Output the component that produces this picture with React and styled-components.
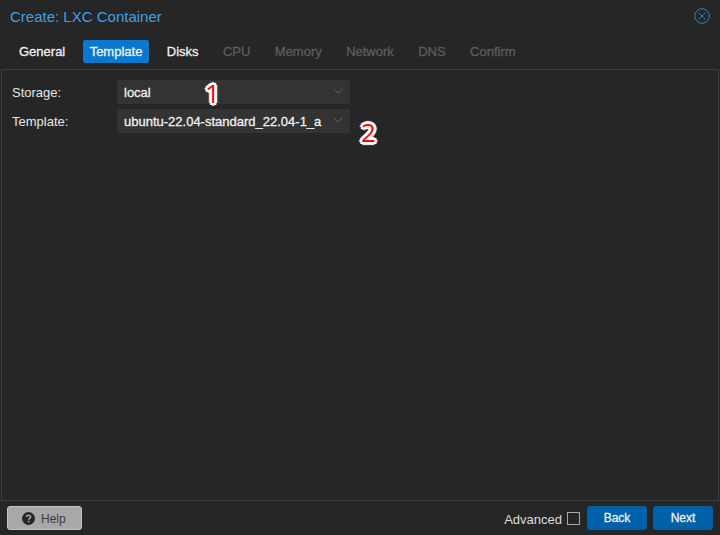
import React from "react";
import styled, { createGlobalStyle } from "styled-components";

const Global = createGlobalStyle`
  html, body { margin: 0; padding: 0; background: #262626; }
  body { font-family: "Liberation Sans", Arial, sans-serif; }
`;

const Window = styled.div`
  position: relative;
  width: 720px;
  height: 535px;
  box-sizing: border-box;
  background: #262626;
  display: flex;
  flex-direction: column;
  overflow: hidden;
`;

const Header = styled.header`
  height: 32px;
  flex: none;
  display: flex;
  align-items: center;
  justify-content: space-between;
  padding: 0 10px;
`;

const Title = styled.h1`
  margin: 0;
  font-size: 15px;
  font-weight: 400;
  color: #3fa0e6;
`;

const CloseIcon = styled.svg`
  width: 16px;
  height: 16px;
  display: block;
`;

const TabBar = styled.nav`
  height: 37px;
  flex: none;
  box-sizing: border-box;
  padding: 8px 0 0 12px;
  display: flex;
  align-items: flex-start;
  gap: 10.4px;
`;

const Tab = styled.div`
  height: 23px;
  box-sizing: border-box;
  padding: 0 7px;
  display: flex;
  align-items: center;
  font-size: 13px;
  font-weight: 400;
  -webkit-text-stroke: 0.3px currentColor;
  border-radius: 2px;
  background: ${(p) => (p.$active ? "#0a78cf" : "transparent")};
  color: ${(p) => (p.$disabled ? "#5d5d5d" : "#f0f0f0")};
`;

const Body = styled.main`
  flex: 1;
  margin: 0 1px;
  border: 1px solid #3d3d3d;
  padding: 10px 10px;
  display: flex;
  flex-direction: column;
  gap: 5px;
`;

const FormRow = styled.div`
  display: flex;
  align-items: center;
  height: 24px;
`;

const Label = styled.label`
  width: 105px;
  flex: none;
  font-size: 13px;
  color: #e6e6e6;
`;

const Select = styled.div`
  width: 233px;
  height: 24px;
  box-sizing: border-box;
  background: #333333;
  padding: 1px 7px 0 7px;
  display: flex;
  align-items: center;
  justify-content: space-between;
  color: #f0f0f0;
  font-size: 13px;
  -webkit-text-stroke: 0.3px currentColor;
`;

const Chevron = styled.svg`
  width: 10px;
  height: 6px;
  display: block;
  margin-top: -4px;
`;

const Marker = styled.span`
  position: absolute;
  left: ${(p) => p.$x}px;
  top: ${(p) => p.$y}px;
  font-family: "Open Sans", sans-serif;
  font-size: 26px;
  line-height: 24px;
  font-weight: 400;
  color: #f00808;
  text-shadow:
    -2px 0 0 #fff, 2px 0 0 #fff, 0 -2px 0 #fff, 0 2px 0 #fff,
    -2px -2px 0 #fff, 2px -2px 0 #fff, -2px 2px 0 #fff, 2px 2px 0 #fff,
    -3px 0 1px #fff, 3px 0 1px #fff, 0 -3px 1px #fff, 0 3px 1px #fff;
`;

const Footer = styled.footer`
  height: 34px;
  flex: none;
  box-sizing: border-box;
  padding: 0 7px;
  display: flex;
  align-items: center;
  justify-content: space-between;
`;

const HelpButton = styled.button`
  width: 75px;
  height: 24px;
  box-sizing: border-box;
  padding: 0 0 0 14px;
  display: flex;
  align-items: center;
  gap: 6px;
  border: 1px solid #c4c4c4;
  border-radius: 3px;
  background: #a8a8a8;
  color: #3c3c3c;
  font: 400 12px "Liberation Sans", Arial, sans-serif;
`;

const HelpLabel = styled.span`
  margin-top: 1px;
`;

const HelpIcon = styled.svg`
  width: 13px;
  height: 13px;
  display: block;
`;

const Actions = styled.div`
  display: flex;
  align-items: center;
`;

const Advanced = styled.span`
  font-size: 13px;
  color: #dcdcdc;
  margin: 2px 5px 0 0;
`;

const CheckBox = styled.span`
  width: 13px;
  height: 13px;
  box-sizing: border-box;
  border: 1px solid #a8a8a8;
  margin-right: 7px;
`;

const PrimaryButton = styled.button`
  width: 60px;
  height: 24px;
  padding: 0;
  margin-left: ${(p) => p.$ml ?? 0}px;
  border: none;
  border-radius: 3px;
  background: #0061a8;
  color: #f0f0f0;
  font: 400 12px "Liberation Sans", Arial, sans-serif;
  -webkit-text-stroke: 0.3px currentColor;
`;

const ChevronDown = () => (
  <Chevron viewBox="0 0 10 6" fill="none" stroke="#5e5e5e" strokeWidth="1">
    <path d="M0.5 0.5 L5 5 L9.5 0.5" />
  </Chevron>
);

export default function App() {
  return (
    <>
      <Global />
      <Window>
        <Header>
          <Title>Create: LXC Container</Title>
          <CloseIcon viewBox="0 0 16 16" fill="none" stroke="#2488c0" strokeWidth="1">
            <circle cx="8" cy="8" r="7.3" />
            <path d="M4.6 4.6 L11.4 11.4 M11.4 4.6 L4.6 11.4" />
          </CloseIcon>
        </Header>
        <TabBar>
          <Tab>General</Tab>
          <Tab $active>Template</Tab>
          <Tab>Disks</Tab>
          <Tab $disabled>CPU</Tab>
          <Tab $disabled>Memory</Tab>
          <Tab $disabled>Network</Tab>
          <Tab $disabled>DNS</Tab>
          <Tab $disabled>Confirm</Tab>
        </TabBar>
        <Body>
          <FormRow>
            <Label>Storage:</Label>
            <Select>local<ChevronDown /></Select>
          </FormRow>
          <FormRow>
            <Label>Template:</Label>
            <Select>ubuntu-22.04-standard_22.04-1_a<ChevronDown /></Select>
          </FormRow>
        </Body>
        <Footer>
          <HelpButton>
            <HelpIcon viewBox="0 0 13 13">
              <circle cx="6.5" cy="6.5" r="6.5" fill="#262626" />
              <path d="M4.4 5 C4.5 2.6 8.6 2.6 8.6 4.9 C8.6 6.4 6.6 6.2 6.6 7.7" fill="none" stroke="#a8a8a8" strokeWidth="1.5" />
              <rect x="5.8" y="8.8" width="1.6" height="1.6" fill="#a8a8a8" />
            </HelpIcon>
            <HelpLabel>Help</HelpLabel>
          </HelpButton>
          <Actions>
            <Advanced>Advanced</Advanced>
            <CheckBox />
            <PrimaryButton>Back</PrimaryButton>
            <PrimaryButton $ml={6}>Next</PrimaryButton>
          </Actions>
        </Footer>
        <Marker $x={205} $y={81}>1</Marker>
        <Marker $x={361} $y={120}>2</Marker>
      </Window>
    </>
  );
}
